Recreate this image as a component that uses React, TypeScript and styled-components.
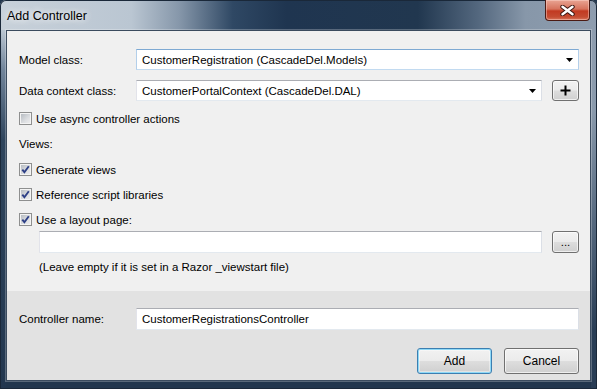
import React from "react";
import styled, { createGlobalStyle, css } from "styled-components";

const GlobalStyle = createGlobalStyle`
    html, body {
        margin: 0;
        padding: 0;
        background: #22364d;
    }
    body {
        font-family: "Liberation Sans", Arial, sans-serif;
        font-size: 11.5px;
        color: #000;
    }
    * {
        box-sizing: border-box;
    }
`;

const aeroButton = css`
    border: 1px solid #707070;
    border-radius: 3px;
    background: linear-gradient(180deg, #f2f2f2 0%, #ebebeb 48%, #dddddd 52%, #cfcfcf 100%);
    box-shadow: inset 0 0 0 1px rgba(255, 255, 255, 0.65);
    font: inherit;
    color: #000;
    padding: 0;
    display: flex;
    align-items: center;
    justify-content: center;
    flex-shrink: 0;
`;

const textBox = css`
    background: #fff;
    border: 1px solid;
    border-color: #abadb3 #dbdfe6 #e3e9ef #e2e3ea;
`;

const Window = styled.div`
    width: 597px;
    height: 389px;
    display: flex;
    flex-direction: column;
    overflow: hidden;
    border-radius: 6px 6px 0 0;
    background:
        linear-gradient(90deg, #c8d1da 0%, #bac6d2 22%, #8697aa 30%, #2f4864 39%, #1f3550 48%, #21374f 70%, #53677e 80%, #8797a9 88%, #8e9daf 100%) left top / 100% 30px no-repeat,
        linear-gradient(180deg, #bac6d2 30px, #71849a 70px, #2f455d 140px, #23374f 100%) left top / 6px 100% no-repeat,
        linear-gradient(180deg, #8e9daf 30px, #8a9aac 110px, #56697f 220px, #293d55 330px) right top / 6px 100% no-repeat,
        #22364d;
    box-shadow: inset 0 0 0 1px #1a2839;
`;

const TitleBar = styled.div`
    height: 30px;
    display: flex;
    align-items: flex-start;
    padding-left: 7px;
    flex-shrink: 0;
`;

const Title = styled.div`
    font-size: 12.5px;
    line-height: 27px;
    padding-top: 3px;
    color: #000;
    text-shadow: 0 0 6px rgba(255, 255, 255, 0.9), 0 0 10px rgba(255, 255, 255, 0.7);
`;

const CloseButton = styled.div`
    margin: 0 7px 0 auto;
    width: 45px;
    height: 21px;
    border: 1px solid #4b1a13;
    border-top: none;
    border-radius: 0 0 4px 4px;
    background: linear-gradient(180deg, #e9a493 0%, #d6735d 45%, #c23a22 55%, #c54c32 85%, #d8765d 100%);
    box-shadow: inset 0 0 0 1px rgba(255, 220, 210, 0.45);
    display: flex;
    align-items: center;
    justify-content: center;
`;

const Body = styled.div`
    flex: 1;
    display: flex;
    padding: 0 6px 8px 6px;
`;

const Client = styled.div`
    flex: 1;
    display: flex;
    flex-direction: column;
    border: 1px solid #3b4b5e;
    box-shadow: 0 0 0 1px rgba(255, 255, 255, 0.25);
    background: #f0f0f0;
`;

const Upper = styled.div`
    height: 260px;
    display: flex;
    flex-direction: column;
    padding: 18px 11px 0 12px;
`;

const Lower = styled.div`
    flex: 1;
    display: flex;
    flex-direction: column;
    background: #e2e2e2;
    padding: 17px 11px 0 12px;
`;

const Row = styled.div<{ $top: number; $h: number; $indent?: number }>`
    display: flex;
    align-items: center;
    height: ${(p) => p.$h}px;
    margin-top: ${(p) => p.$top}px;
    margin-left: ${(p) => p.$indent ?? 0}px;
    gap: 10px;
`;

const Label = styled.div`
    width: 107px;
    flex-shrink: 0;
    white-space: nowrap;
`;

const ComboBox = styled.div<{ $focused?: boolean }>`
    ${textBox}
    flex: 1;
    align-self: stretch;
    display: flex;
    align-items: center;
    padding-left: 5px;
    ${(p) => p.$focused && css`
        border-color: #7ea9d3 #b3cfea #c2daf0 #b3cfea;
    `}
`;

const ComboText = styled.span`
    flex: 1;
    white-space: nowrap;
`;

const Arrow = styled.svg`
    margin-right: 5px;
    flex-shrink: 0;
`;

const TextInput = styled.div`
    ${textBox}
    flex: 1;
    align-self: stretch;
    display: flex;
    align-items: center;
    padding-left: 5px;
    white-space: nowrap;
`;

const SmallButton = styled.button`
    ${aeroButton}
    width: 27px;
    align-self: stretch;
`;

const CheckRow = styled.label<{ $top: number }>`
    display: flex;
    align-items: center;
    height: 17px;
    margin-top: ${(p) => p.$top}px;
`;

const Box = styled.span`
    width: 13px;
    height: 13px;
    margin-right: 4px;
    flex-shrink: 0;
    border: 1px solid #8e8f8f;
    padding: 1px;
    background:
        linear-gradient(135deg, #b7bcc2 0%, #dcdee1 60%, #ececed 100%) content-box,
        linear-gradient(#f4f4f4, #f4f4f4) border-box;
    display: flex;
    align-items: center;
    justify-content: center;
`;

const Plain = styled.div<{ $top: number; $indent?: number }>`
    height: 17px;
    line-height: 17px;
    margin-top: ${(p) => p.$top}px;
    margin-left: ${(p) => p.$indent ?? 0}px;
    white-space: nowrap;
`;

const Buttons = styled.div`
    display: flex;
    justify-content: flex-end;
    gap: 12px;
    margin-top: 18px;
`;

const DialogButton = styled.button<{ $default?: boolean }>`
    ${aeroButton}
    width: 75px;
    height: 26px;
    font-size: 12px;
    ${(p) => p.$default && css`
        border-color: #3c7fb1;
        box-shadow: inset 0 0 0 1px #8fd9f7, inset 0 0 0 2px rgba(255, 255, 255, 0.4);
    `}
`;

const DropArrow = () => (
    <Arrow width="7" height="4" viewBox="0 0 7 4">
        <polygon points="0,0 7,0 3.5,4" fill="#000" />
    </Arrow>
);

const Check: React.FC<{ checked?: boolean; children: React.ReactNode; top: number }> = ({ checked, children, top }) => (
    <CheckRow $top={top}>
        <Box>
            {checked && (
                <svg width="9" height="9" viewBox="0 0 9 9">
                    <path d="M1.3 4.6 L3.4 7.2 L7.8 1.2" stroke="#2d3f86" strokeWidth="1.9" fill="none" />
                </svg>
            )}
        </Box>
        {children}
    </CheckRow>
);

export default function App() {
    return (
        <>
            <GlobalStyle />
            <Window>
                <TitleBar>
                    <Title>Add Controller</Title>
                    <CloseButton>
                        <svg width="15" height="11" viewBox="0 0 15 11">
                            <path d="M2.5 1.8 L12.5 9.2 M12.5 1.8 L2.5 9.2" stroke="#3b1510" strokeWidth="4.4" strokeLinecap="round" />
                            <path d="M2.5 1.8 L12.5 9.2 M12.5 1.8 L2.5 9.2" stroke="#fff" strokeWidth="2.5" strokeLinecap="round" />
                        </svg>
                    </CloseButton>
                </TitleBar>
                <Body>
                    <Client>
                        <Upper>
                            <Row $top={0} $h={21}>
                                <Label>Model class:</Label>
                                <ComboBox $focused>
                                    <ComboText>CustomerRegistration (CascadeDel.Models)</ComboText>
                                    <DropArrow />
                                </ComboBox>
                            </Row>
                            <Row $top={10} $h={21}>
                                <Label>Data context class:</Label>
                                <ComboBox>
                                    <ComboText>CustomerPortalContext (CascadeDel.DAL)</ComboText>
                                    <DropArrow />
                                </ComboBox>
                                <SmallButton>
                                    <svg width="11" height="11" viewBox="0 0 11 11">
                                        <rect x="4.5" y="0.5" width="2" height="10" fill="#000" />
                                        <rect x="0.5" y="4.5" width="10" height="2" fill="#000" />
                                    </svg>
                                </SmallButton>
                            </Row>
                            <Check top={9}>Use async controller actions</Check>
                            <Plain $top={9}>Views:</Plain>
                            <Check checked top={8}>Generate views</Check>
                            <Check checked top={8}>Reference script libraries</Check>
                            <Check checked top={8}>Use a layout page:</Check>
                            <Row $top={3} $h={22} $indent={20}>
                                <TextInput />
                                <SmallButton>...</SmallButton>
                            </Row>
                            <Plain $top={6} $indent={20}>(Leave empty if it is set in a Razor _viewstart file)</Plain>
                        </Upper>
                        <Lower>
                            <Row $top={0} $h={22}>
                                <Label>Controller name:</Label>
                                <TextInput>CustomerRegistrationsController</TextInput>
                            </Row>
                            <Buttons>
                                <DialogButton $default>Add</DialogButton>
                                <DialogButton>Cancel</DialogButton>
                            </Buttons>
                        </Lower>
                    </Client>
                </Body>
            </Window>
        </>
    );
}
